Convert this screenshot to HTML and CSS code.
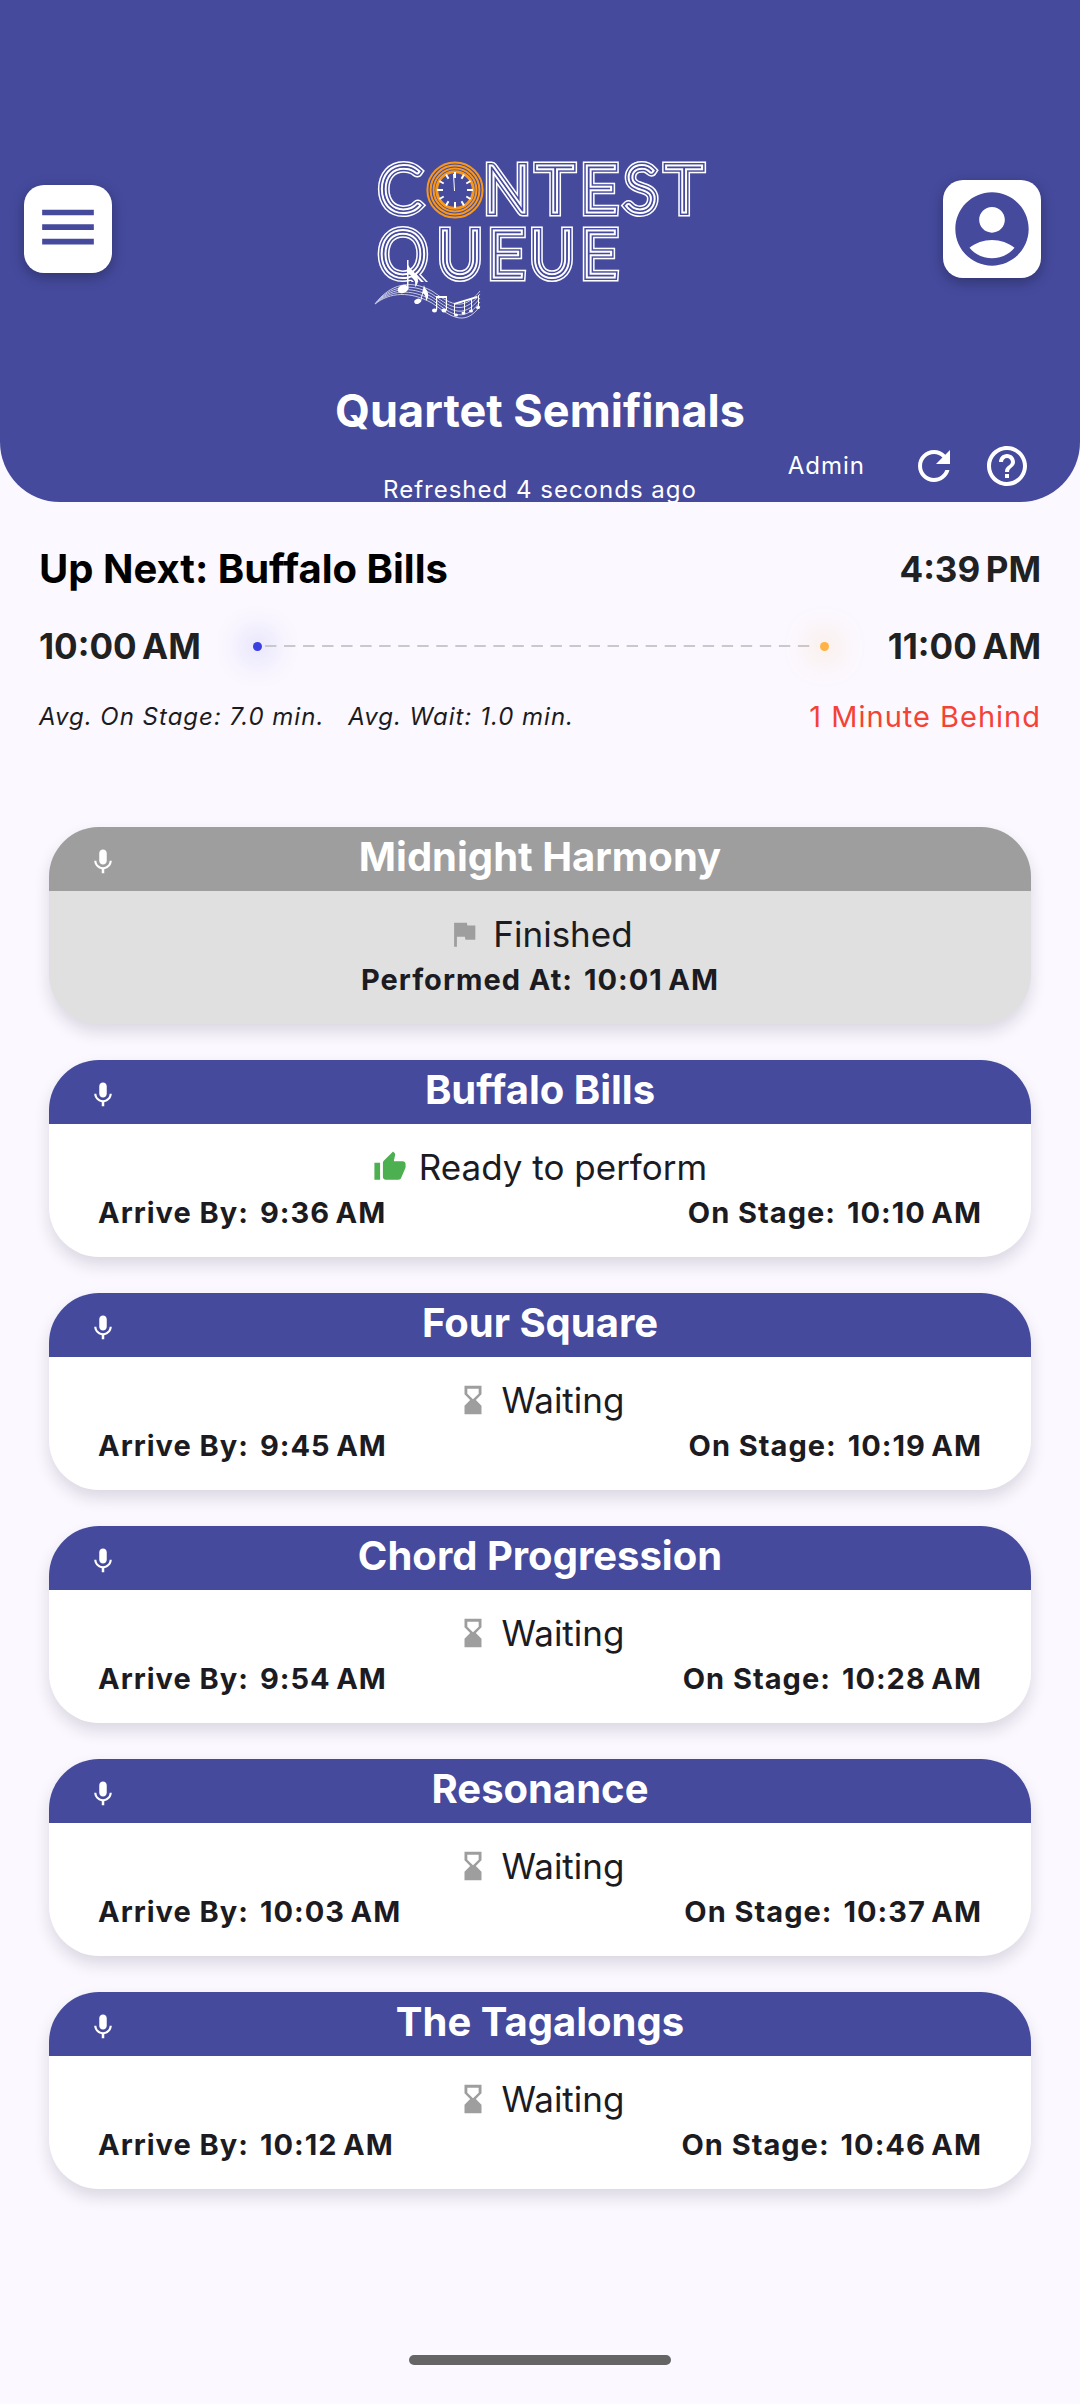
FILE: index.html
```html
<!DOCTYPE html>
<html lang="en">
<head>
<meta charset="utf-8">
<meta name="viewport" content="width=device-width, initial-scale=1">
<title>Contest Queue</title>
<link rel="stylesheet" href="styles.css">
</head>
<body>
<svg class="sprite" aria-hidden="true">
  <symbol id="i-mic" viewBox="0 0 24 24"><path d="M12 14c1.66 0 2.99-1.34 2.99-3L15 5c0-1.660-1.340-3-3-3S9 3.340 9 5v6c0 1.660 1.340 3 3 3zm5.300-3c0 3-2.540 5.100-5.300 5.100S6.700 14 6.700 11H5c0 3.410 2.720 6.230 6 6.720V21h2v-3.280c3.280-.48 6-3.300 6-6.720h-1.700z"/></symbol>
  <symbol id="i-flag" viewBox="0 0 24 24"><path d="M14.400 6L14 4H5v17h2v-7h5.600l.4 2h7V6z"/></symbol>
  <symbol id="i-thumb" viewBox="0 0 24 24"><path d="M1 21h4V9H1v12zm22-11c0-1.100-.9-2-2-2h-6.310l.95-4.570.03-.32c0-.41-.17-.79-.44-1.060L14.170 1 7.590 7.590C7.220 7.950 7 8.450 7 9v10c0 1.100.9 2 2 2h9c.83 0 1.540-.5 1.840-1.220l3.020-7.050c.09-.23.14-.47.14-.73v-2z"/></symbol>
  <symbol id="i-wait" viewBox="0 0 24 24"><path d="M18 22l-.01-6L14 12l3.990-4.010L18 2H6v6l4 4-4 3.990V22h12zM8 7.500V4h8v3.500l-4 4-4-4z"/></symbol>
</svg>

<header class="app-header">
  <div class="top-bar">
    <button class="tile menu-btn" type="button" aria-label="Menu">
      <svg viewBox="0 0 24 24"><path d="M2 4.500h20v2.200H2zM2 10.200h20v2.200H2zM2 15.800h20V18H2z"/></svg>
    </button>
    <svg class="logo" viewBox="0 -20 336 182" role="img" aria-label="Contest Queue">
      <defs>
        <text id="wordmark" class="wordmark" text-anchor="middle"><tspan x="28" y="53">C</tspan><tspan x="135" y="53">N</tspan><tspan x="183" y="53">T</tspan><tspan x="227" y="53">E</tspan><tspan x="269" y="53">S</tspan><tspan x="312" y="53">T</tspan><tspan x="31" y="118">Q</tspan><tspan x="88" y="118">U</tspan><tspan x="134" y="118">E</tspan><tspan x="180" y="118">U</tspan><tspan x="227" y="118">E</tspan></text>
        <clipPath id="letter-rows"><rect width="336" height="124"/></clipPath>
      </defs>
      <g clip-path="url(#letter-rows)">
        <use href="#wordmark" class="line-a"/>
        <use href="#wordmark" class="line-b"/>
        <use href="#wordmark" class="line-c"/>
        <use href="#wordmark" class="line-d"/>
      </g>
      <g class="clock">
        <circle cx="83" cy="32" r="27.600"/><circle cx="83" cy="32" r="24.400"/><circle cx="83" cy="32" r="21.400"/><circle class="inner" cx="83" cy="32" r="18.300"/>
        <path class="ticks" d="M83 14v6M83 44v6M65 32h6M95 32h6M74 16.400l2.500 4.300M92 16.400l-2.500 4.300M67.400 23l4.300 2.500M98.600 23l-4.300 2.500M67.400 41l4.300-2.500M98.600 41l-4.300-2.500M74 47.600l2.500-4.300M92 47.600l-2.500-4.300"/>
        <path class="hand" d="M81.500 16l1 17"/>
      </g>
      <g class="staff">
        <path d="M3 146C18 126 38 121 60 133C76 144 90 156 108 133"/>
        <path d="M3 146C18 128 38 124 60 136C76 147 90 160 108 136"/>
        <path d="M3 146C18 130 38 127 60 139C76 150 90 164 108 140"/>
        <path d="M3 146C18 132 38 130 60 142C76 153 90 168 108 144"/>
        <path d="M3 146C18 134 38 133 60 145C76 156 92 171 108 148"/>
      </g>
      <g class="notes">
        <ellipse cx="31" cy="131" rx="5.500" ry="4" transform="rotate(-20 31 131)"/>
        <path d="M35 102h1.500v5c1 5 9.500 8 9.500 15 0 3-1 5-3 7 1-6-1-11-6.500-13v15H35z"/>
        <ellipse cx="45.500" cy="143.500" rx="3.500" ry="2.500" transform="rotate(-20 45 143)"/>
        <path d="M52 127c1 5 5 5 4 12-.5 2-1 3-2 4 0-4-1-6-3-8l-2 9h-1z"/>
        <ellipse cx="62.500" cy="152.500" rx="2.500" ry="2"/><ellipse cx="72" cy="152.500" rx="2.500" ry="2"/>
        <path d="M64 138h11v14h-1.200v-12h-8.600v12H64z"/>
        <ellipse cx="84" cy="157" rx="2" ry="1.600"/><ellipse cx="91.500" cy="155" rx="2" ry="1.600"/><ellipse cx="99" cy="153" rx="2" ry="1.600"/><ellipse cx="106" cy="149.500" rx="2" ry="1.600"/>
        <path d="M82 145l23-7v2l-23 7zM82 145h1v12h-1zM92 143h1v12h-1zM99 141h1v12h-1zM106 137h1v12h-1z"/>
      </g>
    </svg>
    <button class="tile account-btn" type="button" aria-label="Account">
      <svg viewBox="0 0 24 24"><path d="M12 2C6.480 2 2 6.480 2 12s4.480 10 10 10 10-4.480 10-10S17.520 2 12 2zm0 4c1.930 0 3.500 1.570 3.500 3.500S13.930 13 12 13s-3.500-1.570-3.500-3.500S10.070 6 12 6zm0 14c-2.030 0-4.430-.82-6.140-2.880C7.550 15.800 9.680 15 12 15s4.450.8 6.140 2.120C16.430 19.180 14.030 20 12 20z"/></svg>
    </button>
  </div>
  <h1>Quartet Semifinals</h1>
  <div class="sub-bar">
    <p class="refreshed">Refreshed 4 seconds ago</p>
    <div class="tools">
      <a class="admin" href="#admin">Admin</a>
      <button class="icon-btn" type="button" aria-label="Refresh"><svg viewBox="0 0 24 24"><path d="M17.650 6.350C16.200 4.900 14.210 4 12 4c-4.420 0-7.990 3.580-7.990 8s3.570 8 7.990 8c3.730 0 6.840-2.550 7.730-6h-2.080c-.82 2.330-3.040 4-5.650 4-3.310 0-6-2.690-6-6s2.690-6 6-6c1.660 0 3.140.69 4.220 1.780L13 11h7V4l-2.350 2.350z"/></svg></button>
      <button class="icon-btn" type="button" aria-label="Help"><svg viewBox="0 0 24 24"><path d="M11 18h2v-2h-2v2zm1-16C6.480 2 2 6.480 2 12s4.480 10 10 10 10-4.480 10-10S17.520 2 12 2zm0 18c-4.410 0-8-3.590-8-8s3.590-8 8-8 8 3.590 8 8-3.590 8-8 8zm0-14c-2.210 0-4 1.790-4 4h2c0-1.100.9-2 2-2s2 .9 2 2c0 2-3 1.750-3 5h2c0-2.250 3-2.500 3-5 0-2.210-1.790-4-4-4z"/></svg></button>
    </div>
  </div>
</header>

<section class="summary">
  <div class="row">
    <h2>Up Next: Buffalo Bills</h2>
    <time class="clock-time">4:39&#8239;PM</time>
  </div>
  <div class="row timeline">
    <time class="clock-time">10:00&#8239;AM</time>
    <div class="track"><span class="dot start"></span><span class="dashes"></span><span class="dot end"></span></div>
    <time class="clock-time">11:00&#8239;AM</time>
  </div>
  <div class="row">
    <p class="averages"><span>Avg. On Stage: 7.0 min.</span><span>Avg. Wait: 1.0 min.</span></p>
    <p class="behind">1 Minute Behind</p>
  </div>
</section>

<main class="queue">
  <article class="card done">
    <header><svg class="mic"><use href="#i-mic"/></svg><h3>Midnight Harmony</h3></header>
    <div class="card-body">
      <p class="status"><svg><use href="#i-flag"/></svg>Finished</p>
      <div class="times"><p><span>Performed At:</span><time>10:01&#8239;AM</time></p></div>
    </div>
  </article>
  <article class="card">
    <header><svg class="mic"><use href="#i-mic"/></svg><h3>Buffalo Bills</h3></header>
    <div class="card-body">
      <p class="status ready"><svg><use href="#i-thumb"/></svg>Ready to perform</p>
      <div class="times"><p><span>Arrive By:</span><time>9:36&#8239;AM</time></p><p><span>On Stage:</span><time>10:10&#8239;AM</time></p></div>
    </div>
  </article>
  <article class="card">
    <header><svg class="mic"><use href="#i-mic"/></svg><h3>Four Square</h3></header>
    <div class="card-body">
      <p class="status"><svg><use href="#i-wait"/></svg>Waiting</p>
      <div class="times"><p><span>Arrive By:</span><time>9:45&#8239;AM</time></p><p><span>On Stage:</span><time>10:19&#8239;AM</time></p></div>
    </div>
  </article>
  <article class="card">
    <header><svg class="mic"><use href="#i-mic"/></svg><h3>Chord Progression</h3></header>
    <div class="card-body">
      <p class="status"><svg><use href="#i-wait"/></svg>Waiting</p>
      <div class="times"><p><span>Arrive By:</span><time>9:54&#8239;AM</time></p><p><span>On Stage:</span><time>10:28&#8239;AM</time></p></div>
    </div>
  </article>
  <article class="card">
    <header><svg class="mic"><use href="#i-mic"/></svg><h3>Resonance</h3></header>
    <div class="card-body">
      <p class="status"><svg><use href="#i-wait"/></svg>Waiting</p>
      <div class="times"><p><span>Arrive By:</span><time>10:03&#8239;AM</time></p><p><span>On Stage:</span><time>10:37&#8239;AM</time></p></div>
    </div>
  </article>
  <article class="card">
    <header><svg class="mic"><use href="#i-mic"/></svg><h3>The Tagalongs</h3></header>
    <div class="card-body">
      <p class="status"><svg><use href="#i-wait"/></svg>Waiting</p>
      <div class="times"><p><span>Arrive By:</span><time>10:12&#8239;AM</time></p><p><span>On Stage:</span><time>10:46&#8239;AM</time></p></div>
    </div>
  </article>
</main>
<div class="home-bar"></div>
</body>
</html>
```
FILE: styles.css
```css
:root {
  --primary: #454a9d;
  --surface: #fbf8ff;
  --ink: #1b1b21;
}
* { box-sizing: border-box; }
body {
  margin: 0;
  min-height: 100vh;
  display: flex;
  flex-direction: column;
  background: var(--surface);
  color: var(--ink);
  font-family: Inter, "Liberation Sans", sans-serif;
  font-optical-sizing: none;
}
h1, h2, h3, p { margin: 0; }
svg { display: block; fill: currentColor; }
button {
  border: 0;
  padding: 0;
  background: none;
  color: inherit;
  cursor: pointer;
}
.sprite { display: none; }

/* Header */
.app-header {
  padding-top: 138px;
  border-radius: 0 0 60px 60px;
  background: var(--primary);
  color: #fff;
}
.top-bar {
  display: grid;
  grid-template-columns: 1fr auto 1fr;
  align-items: center;
  padding: 0 39px 0 24px;
}
.top-bar .logo { margin-left: 15px; }
.tile {
  display: grid;
  place-items: center;
  border-radius: 20px;
  background: #fff;
  color: var(--primary);
  box-shadow: 0 4px 14px rgba(0, 0, 0, .3);
}
.menu-btn { width: 88px; height: 88px; }
.menu-btn svg { width: 62px; height: 62px; }
.account-btn { width: 98px; height: 98px; justify-self: end; }
.account-btn svg { width: 88px; height: 88px; }
.logo { width: 336px; height: 182px; }
.wordmark {
  font-family: Lato, sans-serif;
  font-weight: 100;
  font-size: 61px;
}
.line-a { fill: #fff; stroke: #fff; stroke-width: 11px; }
.line-b { fill: var(--primary); stroke: var(--primary); stroke-width: 8px; }
.line-c { fill: #fff; stroke: #fff; stroke-width: 5px; }
.line-d { fill: var(--primary); stroke: var(--primary); stroke-width: 1px; }
.clock { fill: none; stroke: #f7981d; stroke-width: 2px; }
.clock .inner { stroke-width: 3px; }
.clock .ticks { stroke: #fff; stroke-width: 2px; }
.clock .hand { stroke: #fff; stroke-width: 1px; }
.staff { fill: none; stroke: #fff; stroke-width: 1px; opacity: .7; }
.notes { fill: #fff; }

h1 {
  margin-top: 63px;
  font-size: 45px;
  line-height: 56px;
  text-align: center;
}
.sub-bar {
  display: grid;
  grid-template-columns: 1fr auto 1fr;
  height: 63px;
  padding-right: 49px;
  font-size: 24px;
  letter-spacing: 1px;
  line-height: 32px;
}
.refreshed {
  grid-column: 2;
  align-self: end;
  margin: 0 -49px -4px 0;
}
.tools {
  grid-column: 3;
  display: flex;
  align-items: center;
  justify-content: flex-end;
  height: 54px;
}
.admin {
  margin-right: 45px;
  color: inherit;
  text-decoration: none;
}
.icon-btn + .icon-btn { margin-left: 25px; }
.icon-btn svg { width: 48px; height: 48px; }

/* Session summary */
.summary {
  display: grid;
  gap: 26px;
  padding: 40px 39px 0;
}
.row {
  display: flex;
  align-items: center;
  justify-content: space-between;
}
h2 { color: #000; font-size: 40px; line-height: 54px; }
.clock-time {
  color: #212121;
  font-size: 35px;
  font-weight: 700;
  line-height: 48px;
}
.track {
  flex: 1;
  display: flex;
  align-items: center;
  gap: 3px;
  margin: 0 59px 0 52px;
}
.dot { width: 9px; height: 9px; border-radius: 50%; }
.dot.start { background: #3a3fe0; box-shadow: 0 0 30px 8px rgba(58, 63, 224, .25); }
.dot.end { background: #ffb347; box-shadow: 0 0 30px 8px rgba(255, 179, 71, .25); }
.dashes {
  flex: 1;
  height: 2px;
  background: linear-gradient(90deg, #cbc8cc 62%, transparent 62%) 0 0 / 19px 2px round;
}
.averages {
  display: flex;
  gap: 24px;
  font-size: 24px;
  font-style: italic;
  letter-spacing: 1px;
  line-height: 42px;
}
.behind {
  color: #f44336;
  font-size: 29px;
  letter-spacing: 1px;
  line-height: 42px;
}

/* Queue cards */
.queue {
  display: grid;
  gap: 36px;
  padding: 89px 49px 0;
}
.card {
  overflow: hidden;
  border-radius: 50px;
  background: #fff;
  box-shadow: 0 8px 16px rgba(30, 20, 50, .14);
}
.card header {
  display: grid;
  grid-template-columns: 30px 1fr 30px;
  align-items: center;
  padding: 8px 39px 12px;
  background: var(--primary);
  color: #fff;
}
.mic { width: 30px; height: 30px; align-self: end; margin-bottom: 2px; }
h3 { font-size: 40px; line-height: 44px; text-align: center; }
.card-body { padding: 20px 49px 21px; }
.status {
  display: flex;
  align-items: center;
  justify-content: center;
  gap: 12px;
  font-size: 35px;
  line-height: 46px;
}
.status svg { width: 34px; height: 34px; color: #9e9e9e; }
.status.ready svg { color: #4caf50; }
.times {
  display: flex;
  justify-content: space-between;
  font-size: 29px;
  font-weight: 700;
  letter-spacing: 1px;
  line-height: 46px;
}
.times p { display: flex; gap: 11px; }
.done { background: #e0e0e0; }
.done header { background: #9e9e9e; }
.done .times { justify-content: center; }

.home-bar {
  width: 262px;
  height: 10px;
  margin: auto auto 39px;
  border-radius: 5px;
  background: #656565;
}
```
